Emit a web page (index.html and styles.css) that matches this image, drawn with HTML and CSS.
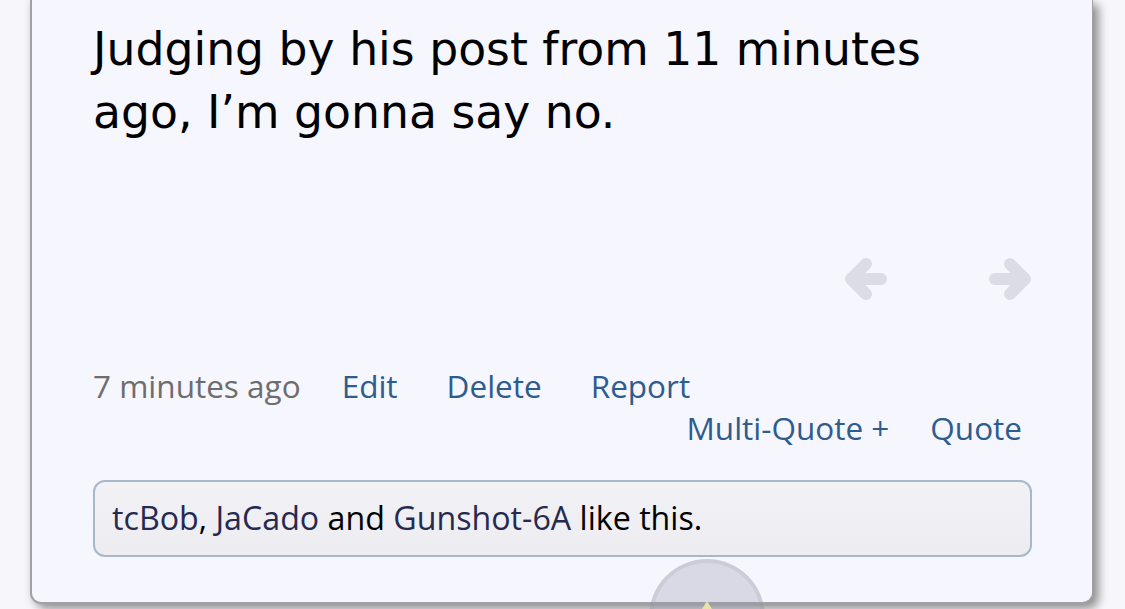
FILE: index.html
```html
<!DOCTYPE html>
<html>
<head>
<meta charset="utf-8">
<link rel="stylesheet" href="styles.css">
</head>
<body>
<div class="card">
  <div class="message">Judging by his post from 11 minutes ago, I’m gonna say no.</div>
  <div class="nav">
    <svg class="arrow" width="44" height="46" viewBox="0 0 44 46"><path d="M37 22 H7 M22 7 L7 22 L22 37" fill="none" stroke="#dcdce6" stroke-width="12" stroke-linecap="round" stroke-linejoin="round"/></svg>
    <svg class="arrow" width="44" height="46" viewBox="0 0 44 46"><path d="M7 22 H37 M22 7 L37 22 L22 37" fill="none" stroke="#dcdce6" stroke-width="12" stroke-linecap="round" stroke-linejoin="round"/></svg>
  </div>
  <div class="meta">
    <span class="time">7 minutes ago</span>
    <a class="link first">Edit</a>
    <a class="link">Delete</a>
    <a class="link">Report</a>
  </div>
  <div class="meta right">
    <a class="link">Multi-Quote +</a>
    <a class="link quote">Quote</a>
  </div>
  <div class="likes"><a class="name">tcBob</a>, <a class="name">JaCado</a> and <a class="name">Gunshot-6A</a> like this.</div>
</div>
<div class="fab"><div class="fab-circle"><span class="fab-icon"></span></div></div>
</body>
</html>
```
FILE: styles.css
```css
html, body {
  margin: 0;
  padding: 0;
  height: 609px;
  overflow: hidden;
}
body {
  background: #f7f7fb;
  position: relative;
}
.card {
  box-sizing: border-box;
  margin-left: 30px;
  width: 1063px;
  height: 604px;
  background: #f5f6fe;
  border: 2px solid #a2a2a6;
  border-top: none;
  border-right: 1px solid #a2a2a6;
  border-radius: 0 0 11px 11px;
  box-shadow: 0 0 10px rgba(0,0,0,0.10), 6px 5px 10px rgba(0,0,0,0.38);
  padding: 18px 60px 0 61px;
  display: flex;
  flex-direction: column;
}
.message {
  font-family: "DejaVu Sans", Verdana, sans-serif;
  font-size: 45.7px;
  line-height: 63px;
  color: #000;
  width: 900px;
}
.nav {
  display: flex;
  justify-content: flex-end;
  gap: 100px;
  margin-top: 113px;
}
.arrow {
  display: block;
}
.meta {
  display: flex;
  font-family: "Open Sans", sans-serif;
  font-size: 31.5px;
  line-height: 42px;
}
.nav + .meta {
  margin-top: 62px;
}
.meta.right {
  justify-content: flex-end;
  padding-right: 10px;
}
.time {
  color: #6d6d70;
}
.link {
  color: #2f5c8e;
  margin-left: 49px;
}
.link.first {
  margin-left: 41px;
}
.meta.right .link {
  margin-left: 0;
}
.meta.right .link.quote {
  margin-left: 41px;
}
.likes {
  margin-top: 31px;
  border: 2px solid #a6b8c9;
  border-radius: 12px;
  background: linear-gradient(#f2f2f6, #ececf1);
  padding: 15px 17px 16px;
  font-family: "Open Sans", sans-serif;
  font-size: 32.2px;
  line-height: 42px;
  color: #000;
}
.name {
  color: #262a50;
}
.fab {
  position: absolute;
  left: 649px;
  top: 559px;
  width: 116px;
  height: 50px;
  overflow: hidden;
}
.fab-circle {
  position: relative;
  width: 116px;
  height: 116px;
  box-sizing: border-box;
  border-radius: 50%;
  background: rgba(150,150,170,0.30);
  border: 4px solid rgba(150,150,165,0.18);
}
.fab-icon {
  position: absolute;
  left: 44px;
  top: 38px;
  width: 0;
  height: 0;
  border-left: 10px solid transparent;
  border-right: 10px solid transparent;
  border-bottom: 16px solid #e9e2a2;
}
```
